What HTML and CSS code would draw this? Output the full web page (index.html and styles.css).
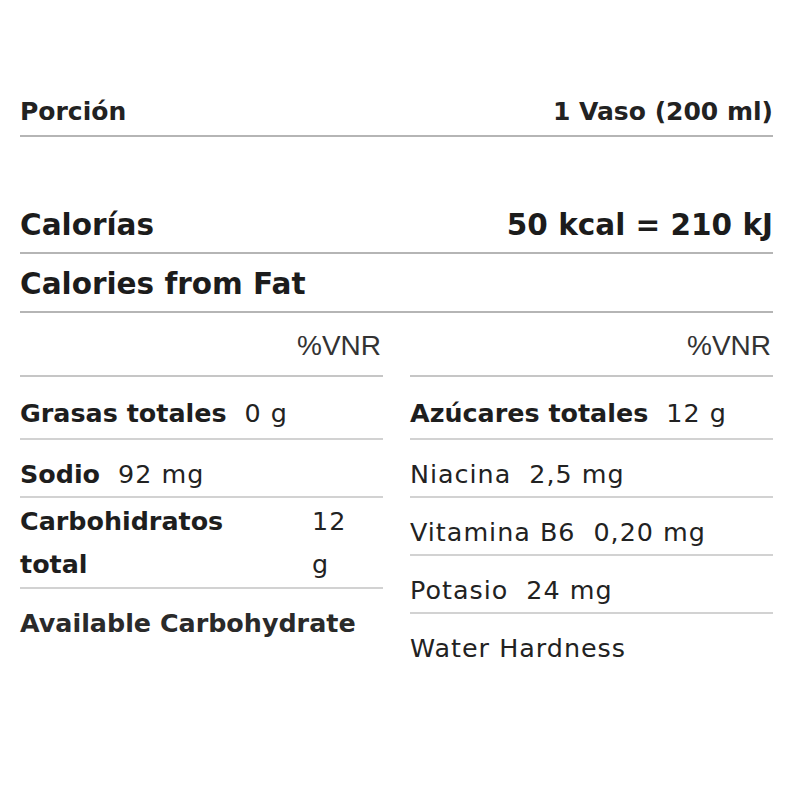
FILE: index.html
```html
<!DOCTYPE html>
<html lang="es">
<head>
    <meta charset="UTF-8">
    <meta name="viewport" content="width=device-width, initial-scale=1.0">
    <title>Información nutricional</title>
    <link rel="stylesheet" href="styles.css">
</head>
<body>

    <div class="nutrition">
        <div class="summary-row serving">
            <span class="label">Porción</span>
            <span class="label">1 Vaso (200 ml)</span>
        </div>

        <div class="summary-row energy">
            <span class="label">Calorías</span>
            <span class="label">50 kcal = 210 kJ</span>
        </div>

        <div class="summary-row fat">
            <span class="label">Calories from Fat</span>
        </div>

        <div class="nutrients">
            <div class="column">
                <div class="vnr">%VNR</div>
                <div class="item first"><span class="name">Grasas totales</span><span class="amount">0 g</span></div>
                <div class="item"><span class="name">Sodio</span><span class="amount">92 mg</span></div>
                <div class="item split">
                    <span class="name">Carbohidratos total</span>
                    <span class="amount">12 g</span>
                </div>
                <div class="item last"><span class="name medium">Available Carbohydrate</span></div>
            </div>

            <div class="column">
                <div class="vnr">%VNR</div>
                <div class="item first"><span class="name">Azúcares totales</span><span class="amount">12 g</span></div>
                <div class="item"><span class="name light">Niacina</span><span class="amount">2,5 mg</span></div>
                <div class="item"><span class="name light">Vitamina B6</span><span class="amount">0,20 mg</span></div>
                <div class="item"><span class="name light">Potasio</span><span class="amount">24 mg</span></div>
                <div class="item last"><span class="name light">Water Hardness</span></div>
            </div>
        </div>
    </div>

</body>
</html>
```

FILE: styles.css
```css
* {
    margin: 0;
    padding: 0;
    box-sizing: border-box;
}

body {
    font-family: 'DejaVu Sans', 'Liberation Sans', sans-serif;
    background-color: #fff;
    color: #1c1c1c;
}

.nutrition {
    width: 800px;
    padding: 0 27px 0 20px;
}

.summary-row {
    display: flex;
    justify-content: space-between;
    align-items: baseline;
    border-bottom: 2px solid #b5b5b5;
}

.summary-row .label {
    font-weight: 700;
}

.serving {
    margin-top: 97px;
    font-size: 25px;
    line-height: 30px;
    padding-bottom: 8px;
}

.serving .label {
    color: #222;
}

.energy {
    margin-top: 70px;
    font-size: 29.5px;
    line-height: 36px;
    padding-bottom: 9px;
}

.fat {
    font-size: 29.5px;
    line-height: 36px;
    padding-top: 12px;
    padding-bottom: 9px;
}

/* Nutrient columns */
.nutrients {
    display: grid;
    grid-template-columns: 363px 363px;
    column-gap: 27px;
}

.vnr {
    font-family: 'Liberation Sans', Arial, sans-serif;
    font-size: 28px;
    line-height: 32px;
    color: #333;
    text-align: right;
    padding-top: 17px;
    padding-right: 2px;
    padding-bottom: 13px;
    border-bottom: 2px solid #c6c6c6;
}

.item {
    display: flex;
    align-items: baseline;
    font-size: 25.4px;
    line-height: 43px;
    padding-top: 13px;
    border-bottom: 2px solid #d2d2d2;
}

.item.first {
    padding-top: 15px;
    padding-bottom: 3px;
}

.item.last {
    border-bottom: none;
}

.item .name {
    font-weight: 700;
    color: #1e1e1e;
}

.item .name.medium {
    color: #2a2a2a;
}

.item .name.light {
    font-weight: 400;
    letter-spacing: 1px;
    color: #222;
}

.item .amount {
    margin-left: 18px;
    font-weight: 400;
    letter-spacing: 1px;
    color: #222;
}

.item.split {
    padding-top: 2px;
    padding-bottom: 1px;
}

.item.split .name {
    width: 292px;
    padding-right: 24px;
}

.item.split .amount {
    width: 34px;
    margin-left: 0;
}
```
